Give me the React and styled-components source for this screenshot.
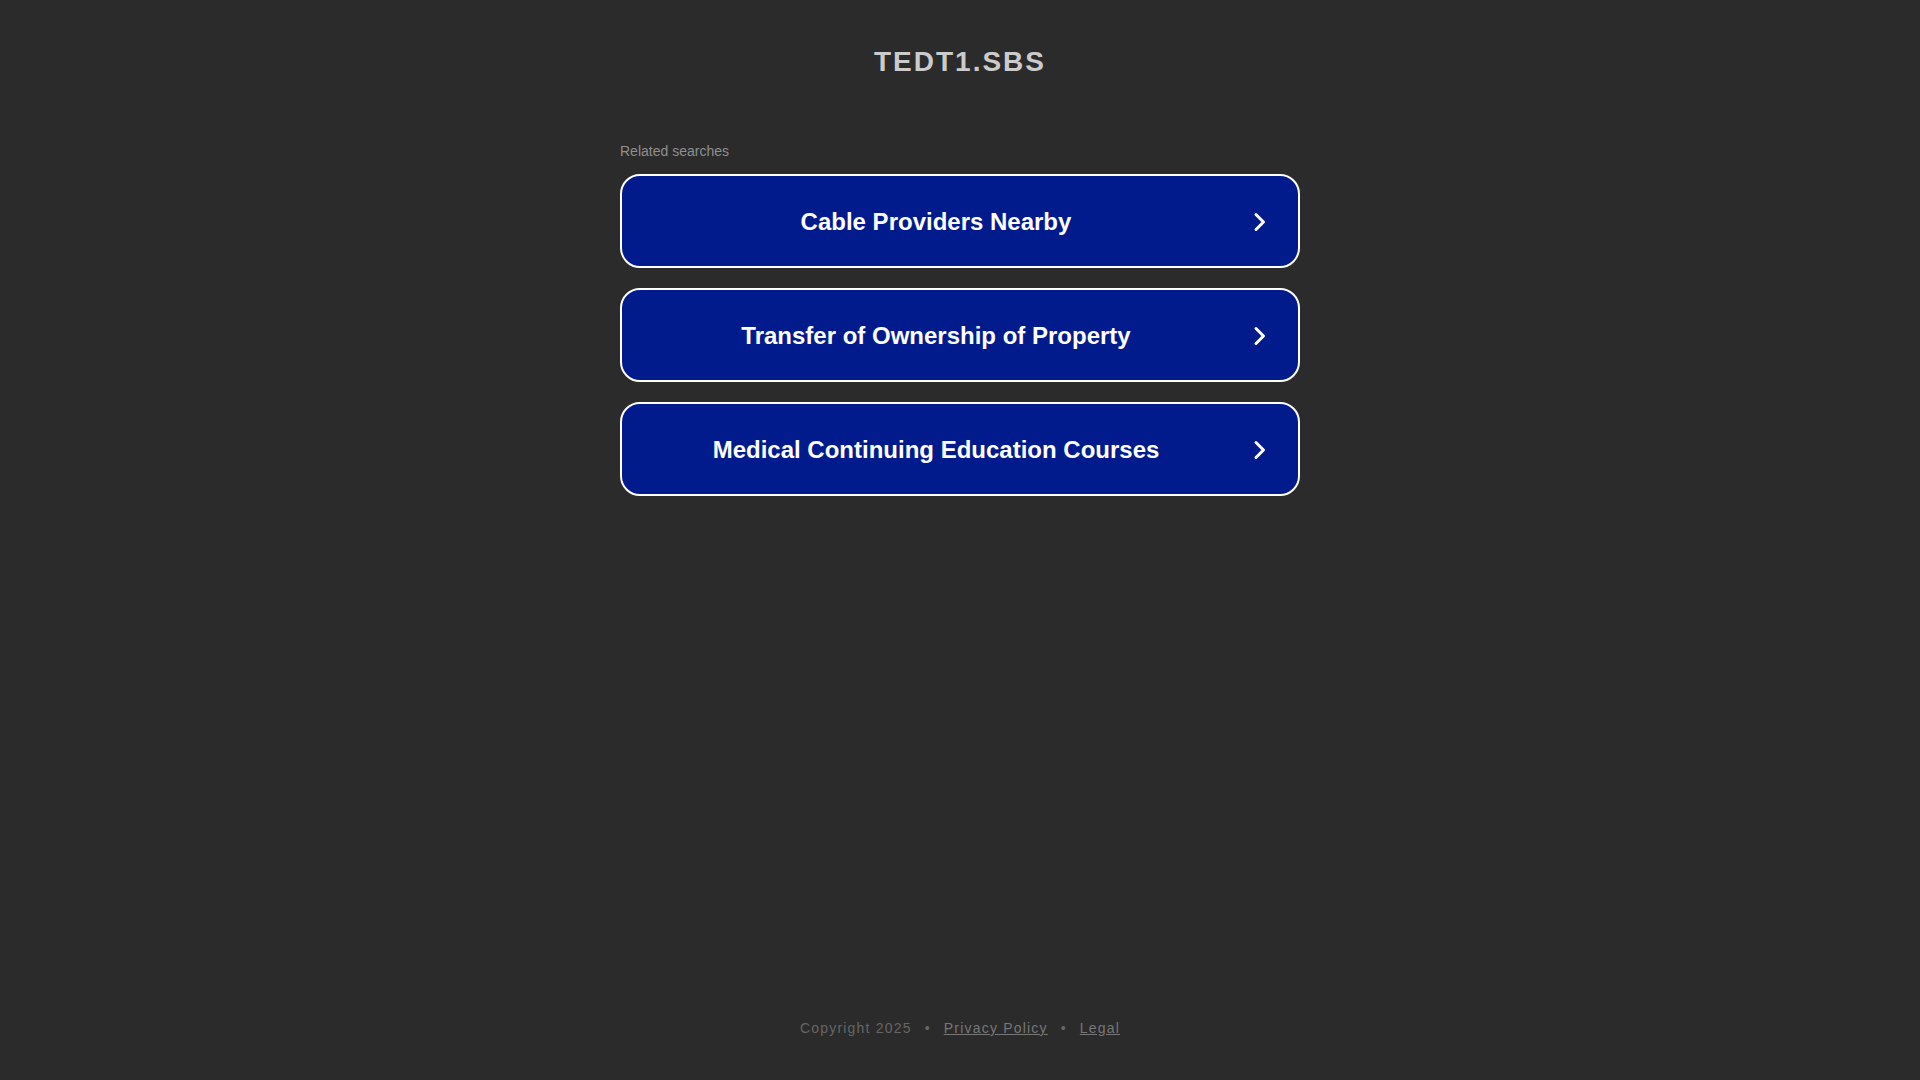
import React from "react";
import styled, { createGlobalStyle } from "styled-components";

const GlobalStyle = createGlobalStyle`
  html, body {
    margin: 0;
    padding: 0;
    background: #2b2b2b;
    font-family: "Liberation Sans", Arial, sans-serif;
  }
`;

const searches = [
  "Cable Providers Nearby",
  "Transfer of Ownership of Property",
  "Medical Continuing Education Courses",
];

export default function App() {
  return (
    <>
      <GlobalStyle />
      <Page>
        <Header>
          <Title>tedt1.sbs</Title>
        </Header>
        <Main>
          <Label>Related searches</Label>
          <List>
            {searches.map((s) => (
              <SearchButton key={s} href="#">
                <ButtonText>{s}</ButtonText>
                <Chevron viewBox="0 0 24 24">
                  <path d="M8 4.5 L15.5 12 L8 19.5" />
                </Chevron>
              </SearchButton>
            ))}
          </List>
        </Main>
        <Footer>
          <span>Copyright 2025</span>
          <Dot>•</Dot>
          <FooterLink href="#">Privacy Policy</FooterLink>
          <Dot>•</Dot>
          <FooterLink href="#">Legal</FooterLink>
        </Footer>
      </Page>
    </>
  );
}

const Page = styled.div`
  display: flex;
  flex-direction: column;
  min-height: 100vh;
`;

const Header = styled.header`
  height: 124px;
  display: flex;
  align-items: center;
  justify-content: center;
`;

const Title = styled.h1`
  margin: 0;
  font-size: 28px;
  font-weight: bold;
  letter-spacing: 2px;
  text-transform: uppercase;
  color: #cbcbcb;
`;

const Main = styled.main`
  width: 680px;
  margin: 19px auto 0;
  flex: 1;
`;

const Label = styled.div`
  font-size: 14px;
  line-height: 16px;
  color: #8f8f8f;
  margin-bottom: 15px;
`;

const List = styled.div`
  display: flex;
  flex-direction: column;
  gap: 20px;
`;

const SearchButton = styled.a`
  display: flex;
  align-items: center;
  height: 94px;
  box-sizing: border-box;
  border: 2px solid #ffffff;
  border-radius: 20px;
  background: #011a8c;
  padding: 2px 26px 0 2px;
  text-decoration: none;
  color: #ffffff;
`;

const ButtonText = styled.span`
  flex: 1;
  text-align: center;
  font-size: 24px;
  font-weight: bold;
`;

const Chevron = styled.svg`
  width: 24px;
  height: 24px;
  fill: none;
  stroke: #ffffff;
  stroke-width: 3;
  stroke-linecap: round;
  stroke-linejoin: round;
`;

const Footer = styled.footer`
  display: flex;
  justify-content: center;
  align-items: center;
  padding-bottom: 44px;
  font-size: 14px;
  line-height: 16px;
  letter-spacing: 1.2px;
  color: #666666;
`;

const Dot = styled.span`
  margin: 0 13px;
`;

const FooterLink = styled.a`
  color: #777777;
  text-decoration: underline;
`;
